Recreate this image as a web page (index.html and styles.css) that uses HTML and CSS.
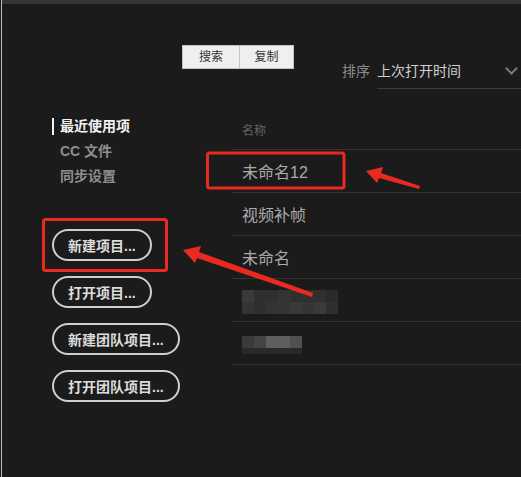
FILE: index.html
```html
<!DOCTYPE html>
<html lang="zh-CN">
<head>
    <meta charset="UTF-8">
    <meta name="viewport" content="width=device-width, initial-scale=1.0">
    <title>开始</title>
    <link rel="stylesheet" href="styles.css">
</head>
<body>
    <div class="app">
        <div class="topbar"></div>

        <div class="toolbar">
            <div class="tools">
                <button class="tool">搜索</button>
                <button class="tool">复制</button>
            </div>
            <div class="sort">
                <span class="sort-label">排序</span>
                <div class="select">
                    <span>上次打开时间</span>
                    <span class="chevron"></span>
                </div>
            </div>
        </div>

        <div class="main">
            <aside class="sidebar">
                <ul class="nav">
                    <li class="active">最近使用项</li>
                    <li>CC 文件</li>
                    <li>同步设置</li>
                </ul>
                <div class="actions">
                    <button class="pill">新建项目...</button>
                    <button class="pill">打开项目...</button>
                    <button class="pill">新建团队项目...</button>
                    <button class="pill">打开团队项目...</button>
                </div>
            </aside>

            <section class="list">
                <div class="list-head">名称</div>
                <div class="row">未命名12</div>
                <div class="row">视频补帧</div>
                <div class="row">未命名</div>
                <div class="row">
                    <div class="mosaic wide">
                        <i class="m3"></i><i class="m1"></i><i class="m1"></i><i class="m2"></i><i class="m1"></i><i class="m1"></i><i class="m1"></i><i class="m0"></i>
                        <i class="m2"></i><i class="m1"></i><i class="m2"></i><i class="m2"></i><i class="m3"></i><i class="m2"></i><i class="m3"></i><i class="m1"></i>
                    </div>
                </div>
                <div class="row">
                    <div class="mosaic short">
                        <i class="m3"></i><i class="m4"></i><i class="m6"></i><i class="m6"></i><i class="m5"></i>
                        <i class="m0"></i><i class="m0"></i><i class="m0"></i><i class="m0"></i><i class="m0"></i>
                    </div>
                </div>
            </section>
        </div>

        <svg class="marks" width="521" height="477" viewBox="0 0 521 477">
            <rect x="43.5" y="219.5" width="123" height="51" rx="2" fill="none" stroke="#ea2a20" stroke-width="3"/>
            <rect x="207.5" y="153" width="136.5" height="35" rx="2" fill="none" stroke="#ea2a20" stroke-width="3"/>
            <polygon points="366,171 383,167 381,173 420,186 419,189 379,178 377,183" fill="#ea2a20"/>
            <polygon points="183,250 201,246 199,252 313,293 312,297 197,258 195,263" fill="#ea2a20"/>
        </svg>
    </div>
</body>
</html>
```

FILE: styles.css
```css
body {
    margin: 0;
    background-color: #1b1b1b;
    font-family: "Liberation Sans", "Noto Sans CJK SC", sans-serif;
}
.app {
    position: relative;
    height: 477px;
    margin-left: 1px;
    border-left: 1px solid #bdbdbd;
    overflow: hidden;
}
.topbar {
    height: 4px;
    background-color: #353535;
}

/* toolbar */
.toolbar {
    display: flex;
    align-items: flex-start;
    padding: 41px 0 0 180px;
}
.tools {
    display: flex;
    border: 1px solid #c4c4c4;
    background-color: #efefef;
}
.tool {
    font-family: inherit;
    font-size: 12px;
    color: #333;
    background: none;
    border: none;
    height: 22px;
    line-height: 22px;
    padding: 0;
    width: 56px;
}
.tool + .tool {
    border-left: 1px solid #c4c4c4;
    width: 54px;
}
.sort {
    display: flex;
    align-items: flex-start;
    margin: 16px 0 0 48px;
    flex: 1;
}
.sort-label {
    font-size: 14px;
    line-height: 20px;
    color: #8c8c8c;
    margin-right: 7px;
}
.select {
    flex: 1;
    display: flex;
    height: 27px;
    border-bottom: 1px solid #3c3c3c;
    font-size: 14px;
    line-height: 20px;
    color: #cfcfcf;
}
.chevron {
    width: 7px;
    height: 7px;
    margin: 3px 5px 0 auto;
    border-right: 2px solid #7c7c7c;
    border-bottom: 2px solid #7c7c7c;
    transform: rotate(45deg);
}

/* main */
.main {
    display: flex;
}
.sidebar {
    width: 180px;
    padding: 25px 0 0 50px;
}
.nav {
    list-style: none;
    margin: 0;
    padding: 0;
}
.nav li {
    font-size: 14px;
    font-weight: bold;
    line-height: 25px;
    color: #8e8e8e;
    padding-left: 8px;
}
.nav li.active {
    color: #f2f2f2;
    padding-left: 6px;
    border-left: 2px solid #f2f2f2;
    line-height: 17px;
    margin: 4px 0;
}
.actions {
    display: flex;
    flex-direction: column;
    align-items: flex-start;
    gap: 15px;
    margin-top: 40px;
}
.pill {
    font-family: inherit;
    font-size: 14px;
    font-weight: bold;
    color: #dcdcdc;
    background: none;
    border: 2px solid #cfcfcf;
    border-radius: 16px;
    height: 32px;
    padding: 0 14px;
}

.list {
    flex: 1;
    padding-top: 34px;
}
.list-head {
    font-size: 12px;
    color: #666;
    line-height: 16px;
    padding: 0 0 10px 10px;
}
.row {
    display: flex;
    align-items: center;
    height: 42px;
    border-top: 1px solid #333;
    padding-left: 10px;
    font-size: 16px;
    color: #ababab;
}
.row:last-child {
    border-bottom: 1px solid #333;
}

/* blurred names */
.mosaic {
    display: grid;
    grid-auto-rows: 12px;
    margin-top: 4px;
}
.mosaic.wide {
    grid-template-columns: repeat(8, 12px);
}
.mosaic.short {
    grid-template-columns: repeat(5, 12px);
    grid-template-rows: 12px 6px;
}
.m0 { background-color: #2a2a2a; }
.m1 { background-color: #2f2f2f; }
.m2 { background-color: #343434; }
.m3 { background-color: #3a3a3a; }
.m4 { background-color: #444; }
.m5 { background-color: #505050; }
.m6 { background-color: #5e5e5e; }

.marks {
    position: absolute;
    top: 0;
    left: -2px;
    pointer-events: none;
}
```
